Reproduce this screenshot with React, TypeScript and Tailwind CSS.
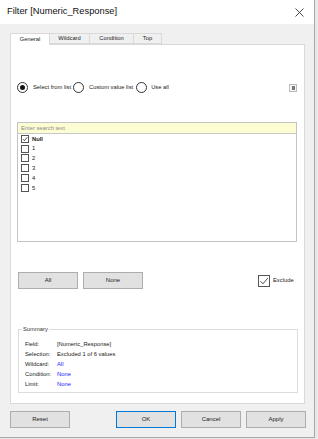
const font = { fontFamily: '"Liberation Sans", Arial, sans-serif' };

function Radio({ checked }: { checked?: boolean }) {
  return (
    <span className="flex h-[11px] w-[11px] shrink-0 items-center justify-center rounded-full border border-[#333] bg-white">
      {checked && <span className="h-[5px] w-[5px] rounded-full bg-[#111]" />}
    </span>
  );
}

function Check({ checked, size = 8, thin }: { checked?: boolean; size?: number; thin?: boolean }) {
  return (
    <span
      className="flex shrink-0 items-center justify-center border border-[#555] bg-white"
      style={{ width: size, height: size }}
    >
      {checked && (
        <svg width={size - 2} height={size - 2} viewBox="0 0 10 10">
          <path d="M1.5 5.2 L4 7.8 L8.8 2" fill="none" stroke="#222" strokeWidth={thin ? 0.8 : 1.3} />
        </svg>
      )}
    </span>
  );
}

function Btn({ label, w, primary }: { label: string; w: number; primary?: boolean }) {
  return (
    <div
      className={
        "flex h-[17px] items-center justify-center border bg-[#e1e1e1] text-[6px] text-[#222] " +
        (primary ? "border-[#0078d7]" : "border-[#adadad]")
      }
      style={{ width: w }}
    >
      {label}
    </div>
  );
}

const summary = [
  ["Field:", "[Numeric_Response]", false],
  ["Selection:", "Excluded 1 of 6 values", false],
  ["Wildcard:", "All", true],
  ["Condition:", "None", true],
  ["Limit:", "None", true],
] as const;

export default function App() {
  return (
    <div className="h-[439px] w-[318px] bg-[#e8e8e8]" style={font}>
      <div className="flex h-[438px] w-[315px] flex-col border-r border-b border-[#a8a8a8] bg-[#f0f0f0]">
        {/* title bar */}
        <div className="flex h-[24px] shrink-0 items-center justify-between bg-white pl-[7px] pr-[10px]">
          <span className="text-[9.3px] text-[#111]">Filter [Numeric_Response]</span>
          <svg width="9" height="9" viewBox="0 0 9 9">
            <path d="M0.5 0.5 L8.5 8.5 M8.5 0.5 L0.5 8.5" stroke="#333" strokeWidth="0.9" />
          </svg>
        </div>

        <div className="pl-[10px]">
          {/* tabs */}
          <div className="mt-[8px] flex h-[12px] items-end text-[5.8px] text-[#222]">
            <div className="relative z-10 -mb-px flex h-[12px] w-[40px] items-center justify-center border border-b-0 border-[#d9d9d9] bg-white">
              General
            </div>
            <div className="flex h-[11px] w-[40px] items-center justify-center border border-l-0 border-[#d9d9d9] bg-[#f0f0f0]">
              Wildcard
            </div>
            <div className="flex h-[11px] w-[44px] items-center justify-center border border-l-0 border-[#d9d9d9] bg-[#f0f0f0]">
              Condition
            </div>
            <div className="flex h-[11px] w-[28px] items-center justify-center border border-l-0 border-[#d9d9d9] bg-[#f0f0f0]">
              Top
            </div>
          </div>

          {/* panel */}
          <div className="flex h-[360px] w-[295px] flex-col border border-[#d9d9d9] bg-white text-[5.8px] text-[#222]">
            <div className="mt-[37px] flex h-[11px] items-center justify-between pl-[6px] pr-[7px]">
              <div className="flex items-center">
                <Radio checked />
                <span className="ml-[5px] mr-[2px]">Select from list</span>
                <Radio />
                <span className="ml-[5px] mr-[3px]">Custom value list</span>
                <Radio />
                <span className="ml-[4px]">Use all</span>
              </div>
              <div className="flex h-[8px] w-[8px] items-center justify-center border border-[#bbb] bg-[#f4f4f4]">
                <span className="h-[4px] w-[3px] bg-[#777]" />
              </div>
            </div>

            {/* list */}
            <div className="ml-[6px] mt-[29px] flex h-[120px] w-[280px] flex-col border border-[#c4c4c4]">
              <div className="flex h-[11px] shrink-0 items-center border-b border-[#c8c8c8] bg-[#fdfdd3] pl-[3px] text-[#8a8a8a]">
                Enter search text
              </div>
              <div className="flex flex-col pl-[3px]">
                {["Null", "1", "2", "3", "4", "5"].map((v, i) => (
                  <div key={v} className="flex h-[9.8px] items-center gap-[3px]">
                    <Check checked={i === 0} />
                    <span className={i === 0 ? "font-bold" : ""}>{v}</span>
                  </div>
                ))}
              </div>
            </div>

            {/* all / none / exclude */}
            <div className="mt-[30px] flex h-[17px] items-center pl-[7px]">
              <Btn label="All" w={60} />
              <div className="ml-[5px]">
                <Btn label="None" w={60} />
              </div>
              <div className="ml-[115px] flex items-center gap-[3px]">
                <Check checked size={12} thin />
                <span>Exclude</span>
              </div>
            </div>

            {/* summary */}
            <fieldset className="ml-[7px] mt-[37px] h-[67px] w-[280px] border border-[#dcdcdc] pl-[6px]">
              <legend className="ml-[-3px] px-[1px] leading-[6px] text-[#333]">Summary</legend>
              <div className="mt-[7px] flex flex-col">
                {summary.map(([k, v, blue]) => (
                  <div key={k} className="flex h-[10px] items-center">
                    <span className="w-[32px]">{k}</span>
                    <span className={blue ? "text-[#1a1aff]" : ""}>{v}</span>
                  </div>
                ))}
              </div>
            </fieldset>
          </div>

          {/* dialog buttons */}
          <div className="mt-[7px] flex items-center">
            <Btn label="Reset" w={60} />
            <div className="ml-[46px] flex gap-[5px]">
              <Btn label="OK" w={60} primary />
              <Btn label="Cancel" w={60} />
              <Btn label="Apply" w={60} />
            </div>
          </div>
        </div>
      </div>
    </div>
  );
}
